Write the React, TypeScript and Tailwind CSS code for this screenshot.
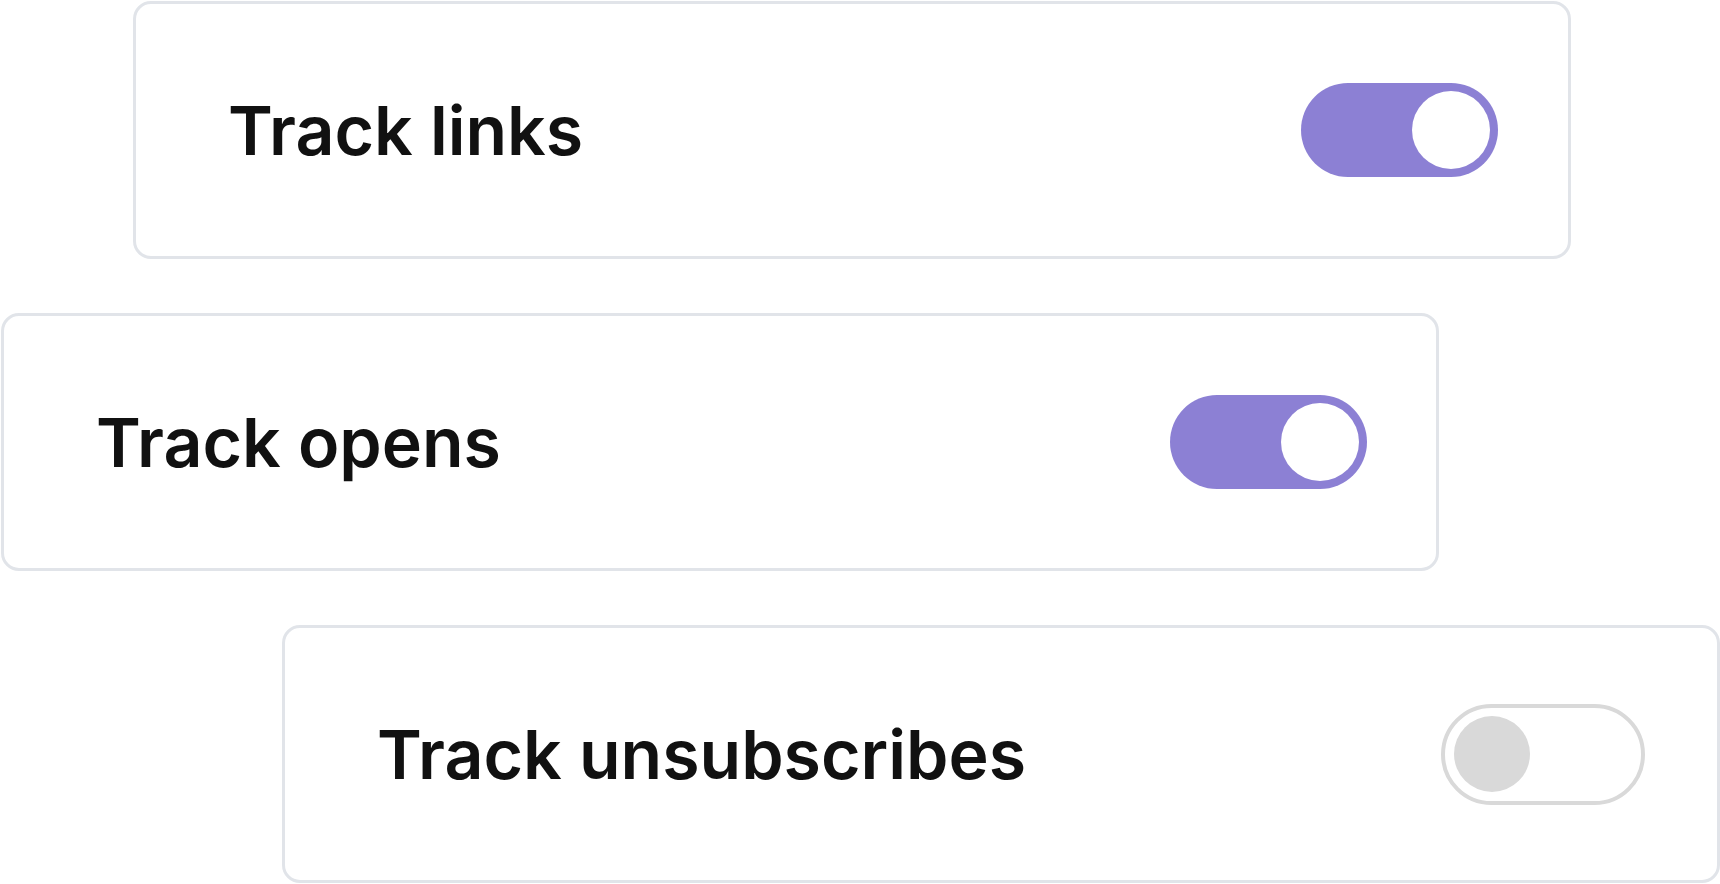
import React from "react";

function Toggle({ on }: { on: boolean }) {
  if (on) {
    return (
      <div className="flex h-[94px] w-[197px] shrink-0 items-center justify-end rounded-full bg-[#8c80d4] pr-[8px]">
        <div className="h-[78px] w-[78px] rounded-full bg-white" />
      </div>
    );
  }
  return (
    <div className="flex h-[101px] w-[204px] shrink-0 items-center justify-start rounded-full border-4 border-[#d9d9d9] bg-white pl-[9px]">
      <div className="h-[76px] w-[76px] rounded-full bg-[#d9d9d9]" />
    </div>
  );
}

function Card({
  label,
  on,
  offsetClass,
  rightClass,
}: {
  label: string;
  on: boolean;
  offsetClass: string;
  rightClass: string;
}) {
  return (
    <div
      className={`flex h-[258px] w-[1438px] items-center justify-between rounded-[18px] border-[3px] border-[#e1e4e9] bg-white pl-[92px] ${rightClass} ${offsetClass}`}
    >
      <span
        className="text-[68px] font-semibold leading-none text-[#111111]"
        style={{ fontFamily: "Inter, 'Noto Sans', sans-serif" }}
      >
        {label}
      </span>
      <Toggle on={on} />
    </div>
  );
}

export default function App() {
  return (
    <div className="flex h-[884px] w-[1720px] flex-col gap-[54px] overflow-hidden bg-white pt-[1px]">
      <Card label="Track links" on={true} offsetClass="ml-[133px]" rightClass="pr-[70px]" />
      <Card label="Track opens" on={true} offsetClass="ml-[1px]" rightClass="pr-[69px]" />
      <Card label="Track unsubscribes" on={false} offsetClass="ml-[282px]" rightClass="pr-[72px]" />
    </div>
  );
}
